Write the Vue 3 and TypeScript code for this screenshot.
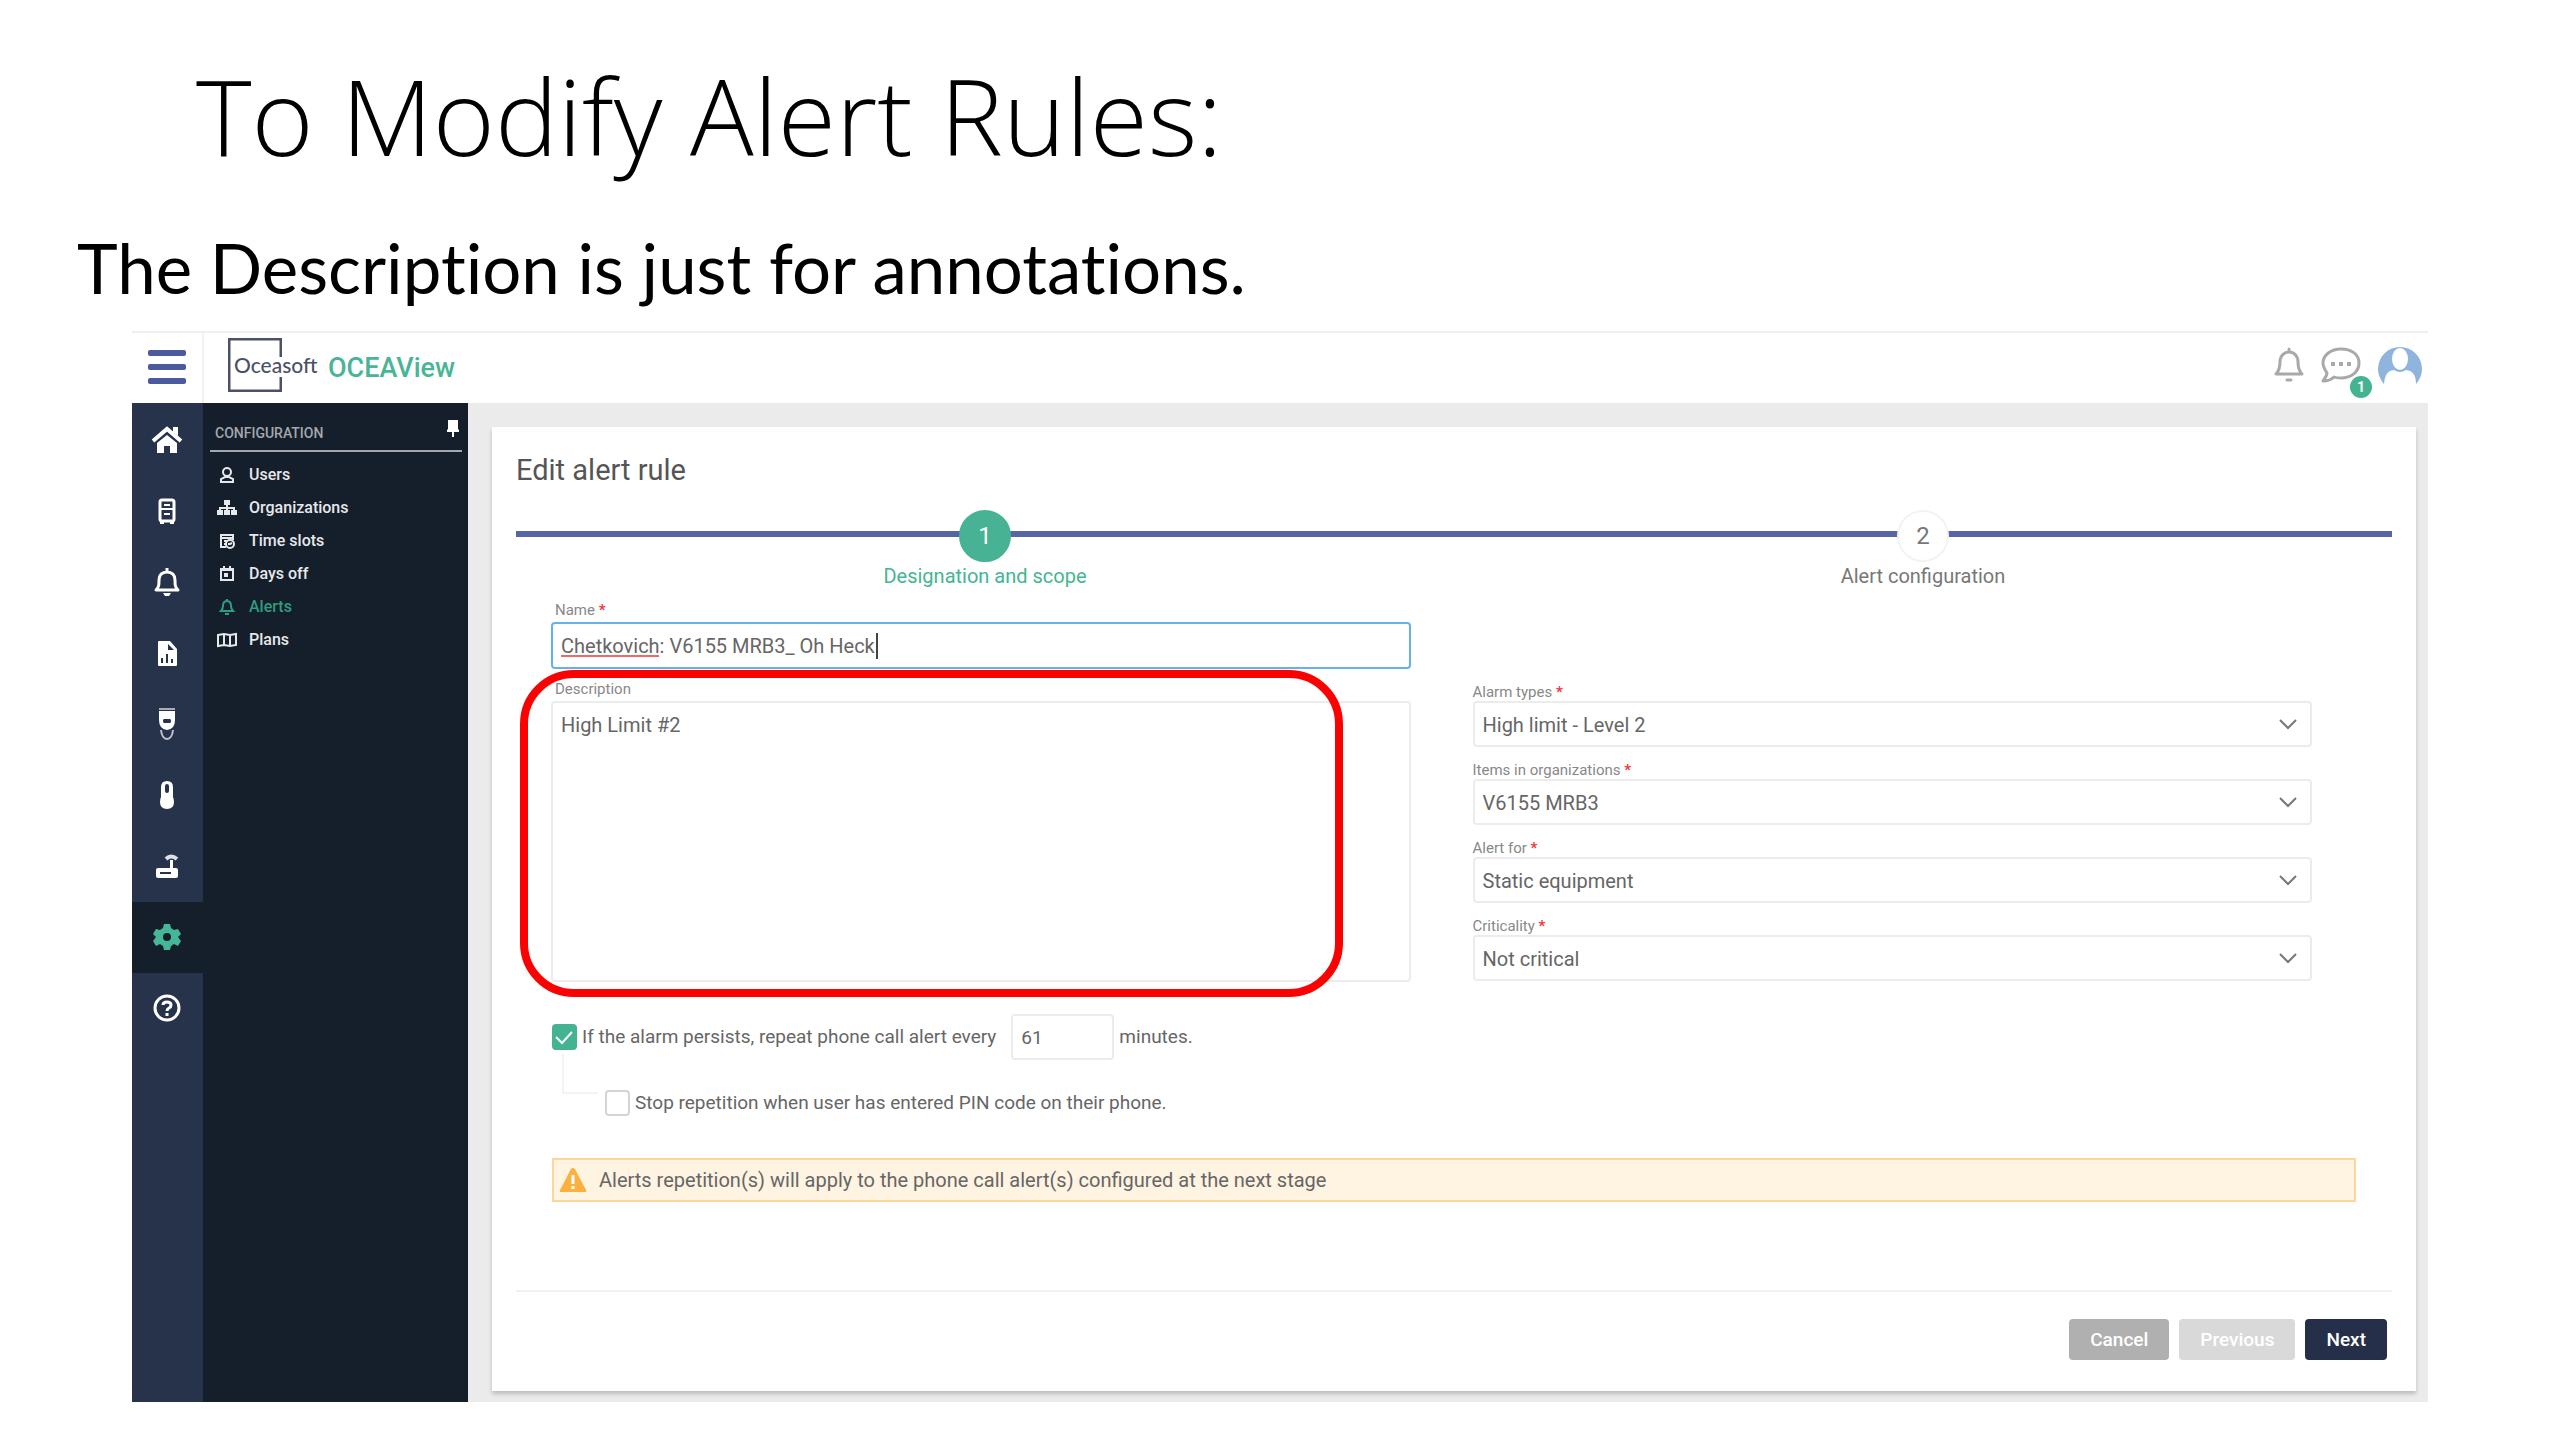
<script setup lang="ts">
import { ref } from 'vue'

interface MenuEntry {
  id: string
  label: string
}

interface SelectField {
  id: string
  label: string
  value: string
}

const railItems: string[] = ['Home', 'Equipment', 'Alarms', 'Reports', 'Modules', 'Sensors', 'Gateways', 'Configuration', 'Help']
const activeRail = 'Configuration'

const menuEntries: MenuEntry[] = [
  { id: 'users', label: 'Users' },
  { id: 'organizations', label: 'Organizations' },
  { id: 'slots', label: 'Time slots' },
  { id: 'days', label: 'Days off' },
  { id: 'alerts', label: 'Alerts' },
  { id: 'plans', label: 'Plans' },
]

const selectFields: SelectField[] = [
  { id: 'alarm-types', label: 'Alarm types', value: 'High limit - Level 2' },
  { id: 'items', label: 'Items in organizations', value: 'V6155 MRB3' },
  { id: 'alert-for', label: 'Alert for', value: 'Static equipment' },
  { id: 'criticality', label: 'Criticality', value: 'Not critical' },
]

const ruleName = ref('Chetkovich: V6155 MRB3_ Oh Heck')
const description = ref('High Limit #2')
const repeatCall = ref(true)
const repeatMinutes = ref('61')
const stopOnPin = ref(false)
</script>

<template>
  <div class="slide">
    <h1 class="slide-title">To Modify Alert Rules:</h1>
    <p class="slide-text">The Description is just for annotations.</p>

    <div class="app">
      <header class="topbar">
        <button class="burger" type="button" aria-label="Toggle menu">
          <span></span><span></span><span></span>
        </button>
        <a class="brand" href="#">
          <span class="logo">
            <svg class="logo-frame" viewBox="0 0 54 54" aria-hidden="true">
              <path d="M53 19V1H1v52h52V39" fill="none" stroke="#4d5166" stroke-width="3" />
            </svg>
            <span class="logo-text">Oceasoft</span>
          </span>
          <span class="product">OCEAView</span>
        </a>
        <div class="tools">
          <button class="tool" type="button" aria-label="Notifications">
            <svg width="32" height="36" viewBox="0 0 32 36" fill="none" stroke="#a9a9a9" stroke-width="3" stroke-linecap="round" stroke-linejoin="round">
              <path d="M16 2v3M3 27h26c-4-4-4-8-4-12 0-6-4-10-9-10s-9 4-9 10c0 4 0 8-4 12zM14 33h4" />
            </svg>
          </button>
          <button class="tool chat" type="button" aria-label="Messages">
            <svg width="40" height="36" viewBox="0 0 40 36" fill="none" stroke="#a9a9a9" stroke-width="3" stroke-linejoin="round">
              <path d="M20 2C10 2 2 8 2 16c0 4 2 7 4 10 0 3-2 5-4 8 5 0 8-1 11-4 2 1 5 1 7 1 10 0 18-6 18-15S30 2 20 2z" />
              <path d="M10 17h4M18 17h4M26 17h4" stroke-width="4" />
            </svg>
            <span class="badge">1</span>
          </button>
          <button class="tool" type="button" aria-label="Profile">
            <svg width="46" height="40" viewBox="0 0 46 40">
              <path d="M7 39A22 22 0 1 1 39 39C39 30 36 26 29 25Q23 29 17 25C10 26 8 30 7 39z" fill="#8fb4dd" />
              <ellipse cx="23" cy="14" rx="8" ry="11" fill="#fff" />
            </svg>
          </button>
        </div>
      </header>

      <div class="body">
        <nav class="rail" aria-label="Main">
          <a v-for="item in railItems" :key="item" href="#" class="rail-item" :class="{ active: item === activeRail }" :aria-label="item">
            <svg width="32" height="32" viewBox="0 0 32 32" fill="currentColor">
              <template v-if="item === 'Home'">
                <path d="M2 17 16 5l14 12" fill="none" stroke="currentColor" stroke-width="4" />
                <path d="M22 3h5v9l-5-4zM16 11 6 19v10h7v-7h6v7h7V19z" />
              </template>
              <template v-else-if="item === 'Equipment'">
                <rect x="9" y="5" width="14" height="21" rx="2" fill="none" stroke="currentColor" stroke-width="3" />
                <path d="M9 14h14M13 10h6M13 19h6" fill="none" stroke="currentColor" stroke-width="2" />
                <path d="M9 26h4v3H9zM19 26h4v3h-4z" />
              </template>
              <template v-else-if="item === 'Alarms'">
                <path d="M16 2v4M5 24h22c-3-3-3-5-3-10 0-5-3-8-8-8s-8 3-8 8c0 5 0 7-3 10z" fill="none" stroke="currentColor" stroke-width="3" stroke-linejoin="round" />
                <path d="M12 27h8l-2 3h-4z" />
              </template>
              <template v-else-if="item === 'Reports'">
                <path fill-rule="evenodd" d="M8 4h11l7 8v16q0 1-1 1H8q-1 0-1-1V5q0-1 1-1zM17 7v6h6zM10 21v5h2v-5zM15 17v9h2v-9zM20 22v4h2v-4z" />
              </template>
              <template v-else-if="item === 'Modules'">
                <path d="M8 0h16v2H8z" opacity="0.6" />
                <path fill-rule="evenodd" d="M8 3h16v9q0 9-8 10-8-1-8-10zM13 11q-1 0-1 2t1 2h6q1 0 1-2t-1-2z" />
                <path d="M10 22q1 9 6 9t6-9" fill="none" stroke="currentColor" stroke-width="2" opacity="0.7" />
              </template>
              <template v-else-if="item === 'Sensors'">
                <path fill-rule="evenodd" d="M16 2q6 0 6 6v10q1 2 1 5 0 7-7 7t-7-7q0-3 1-5V8q0-6 6-6zM16 5q-2 0-2 2v5q0 2 2 2t2-2V7q0-2-2-2z" />
              </template>
              <template v-else-if="item === 'Gateways'">
                <path fill-rule="evenodd" d="M19 10h3v8h3q2 0 2 2v6q0 2-2 2H7q-2 0-2-2v-6q0-2 2-2h12zM9 22v2h11v-2z" />
                <path d="M15 9q5-5 11 0" fill="none" stroke="currentColor" stroke-width="4" opacity="0.85" />
              </template>
              <template v-else-if="item === 'Configuration'">
                <path fill-rule="evenodd" d="M13 3h6l1 4 3 2 4-1 3 5-3 3 3 4-3 5-4-2-3 2-1 4h-6l-1-4-3-2-4 2-3-5 3-4-3-3 3-5 4 1 3-2zM16 12a4 4 0 1 0 0 8 4 4 0 0 0 0-8z" />
              </template>
              <template v-else>
                <circle cx="16" cy="16" r="12" fill="none" stroke="currentColor" stroke-width="3" />
                <path d="M12 13q0-3 4-3t4 3q0 2-2 3t-2 3M16 21v3" fill="none" stroke="currentColor" stroke-width="3" />
              </template>
            </svg>
          </a>
        </nav>

        <aside class="menu">
          <div class="menu-head">
            <span>CONFIGURATION</span>
            <button class="pin" type="button" aria-label="Pin menu">
              <svg width="12" height="18" viewBox="0 0 12 18" fill="#fff">
                <path d="M1 0h10v9l1 1v2H7v5H5v-5H0v-2l1-1z" />
              </svg>
            </button>
          </div>
          <a v-for="entry in menuEntries" :key="entry.id" href="#" class="menu-item" :class="{ active: entry.id === 'alerts' }">
            <svg width="20" height="18" viewBox="0 0 20 18" fill="none" stroke="currentColor" stroke-width="2">
              <template v-if="entry.id === 'users'">
                <circle cx="10" cy="6" r="4" />
                <path d="M4 16v-3l4-2h4l4 2v3z" />
              </template>
              <template v-else-if="entry.id === 'organizations'">
                <path d="M10 4v10M3 13V9h14v4" />
                <path d="M7 1h6v5H7zM0 11h6v5H0zM7 11h6v5H7zM14 11h6v5h-6z" fill="currentColor" stroke="none" />
              </template>
              <template v-else-if="entry.id === 'slots'">
                <path d="M9 15H4V3h12v5M4 6h12M7 9h3M7 12h2" />
                <circle cx="13" cy="12" r="4" />
                <path d="M11 12h2l2-1" />
              </template>
              <template v-else-if="entry.id === 'days'">
                <path d="M4 4h12v11H4zM4 5h12M7 1v3M13 1v3" />
                <path d="M7 8h4v4H7z" fill="currentColor" stroke="none" />
              </template>
              <template v-else-if="entry.id === 'alerts'">
                <path d="M10 1v2M4 13h12c-2-2-2-3-2-5 0-3-1-5-4-5S6 5 6 8c0 2 0 3-2 5zM8 16h4" />
              </template>
              <template v-else>
                <path d="M1 4l6-1 6 1 6-1v11l-6 1-6-1-6 1zM7 3v11M13 4v11" />
              </template>
            </svg>
            <span>{{ entry.label }}</span>
          </a>
        </aside>

        <main class="main">
          <form class="card" @submit.prevent>
            <h2 class="card-title">Edit alert rule</h2>

            <ol class="stepper">
              <li class="step current"><span class="dot">1</span><span>Designation and scope</span></li>
              <li class="step"><span class="dot">2</span><span>Alert configuration</span></li>
            </ol>

            <div class="columns">
              <div class="column-left">
                <div class="field">
                  <label for="rule-name">Name <em>*</em></label>
                  <div class="name-box">
                    <input id="rule-name" v-model="ruleName" type="text" spellcheck="false" />
                    <i class="spell-mark"></i>
                    <i class="caret"></i>
                  </div>
                </div>
                <div class="field description">
                  <label for="rule-description">Description</label>
                  <textarea id="rule-description" v-model="description"></textarea>
                  <div class="highlight"></div>
                </div>
              </div>

              <div class="column-right">
                <div v-for="field in selectFields" :key="field.id" class="select-field">
                  <label :for="field.id">{{ field.label }} <em>*</em></label>
                  <div class="select-box">
                    <select :id="field.id">
                      <option>{{ field.value }}</option>
                    </select>
                    <svg class="chevron" width="20" height="12" viewBox="0 0 20 12" fill="none" stroke="#777" stroke-width="2" aria-hidden="true">
                      <path d="M2 2l8 8 8-8" />
                    </svg>
                  </div>
                </div>
              </div>
            </div>

            <div class="options">
              <div class="option">
                <input id="repeat" v-model="repeatCall" class="tick" type="checkbox" />
                <label for="repeat">If the alarm persists, repeat phone call alert every</label>
                <input id="minutes" v-model="repeatMinutes" class="minutes" type="text" aria-label="Minutes" />
                <span>minutes.</span>
                <svg v-if="repeatCall" class="tick-mark" width="24" height="24" viewBox="0 0 24 24" fill="none" stroke="#fff" stroke-width="2" aria-hidden="true">
                  <path d="M4 12l6 6L20 7" />
                </svg>
              </div>
              <div class="option nested">
                <input id="stop" v-model="stopOnPin" class="tick" type="checkbox" />
                <label for="stop">Stop repetition when user has entered PIN code on their phone.</label>
              </div>
              <div class="notice" role="note">
                <svg width="28" height="26" viewBox="0 0 28 26" aria-hidden="true">
                  <path d="M14 1q1 0 2 1l11 21q1 2-1 2H2q-2 0-1-2L12 2q1-1 2-1z" fill="#fbb03f" />
                  <path d="M14 8v9M14 19v3" stroke="#fff" stroke-width="3" />
                </svg>
                <span>Alerts repetition(s) will apply to the phone call alert(s) configured at the next stage</span>
              </div>
            </div>

            <footer class="actions">
              <button class="btn cancel" type="button">Cancel</button>
              <button class="btn previous" type="button" disabled>Previous</button>
              <button class="btn next" type="submit">Next</button>
            </footer>
          </form>
        </main>
      </div>
    </div>
  </div>
</template>

<style>
body {
  margin: 0;
  background: #fff;
}
</style>

<style scoped>
* {
  box-sizing: border-box;
}

.slide {
  padding: 55px 132px 38px;
  font-family: Roboto, "Liberation Sans", sans-serif;
  font-size: 20px;
  line-height: 24px;
  color: #666;
}

.slide-title,
.slide-text {
  margin: 0;
  font-variant-ligatures: none;
  color: #000;
}

.slide-title {
  padding-left: 64px;
  font-family: "Open Sans", "Noto Sans", sans-serif;
  font-size: 106px;
  font-weight: 300;
  line-height: 120px;
}

.slide-text {
  margin: 53px 0 23px -55px;
  font-family: Lato, "Open Sans", sans-serif;
  font-size: 69px;
  font-weight: 400;
  line-height: 80px;
}

button {
  padding: 0;
  border: 0;
  background: none;
  font: inherit;
}

svg {
  display: block;
}

.topbar {
  display: flex;
  align-items: stretch;
  height: 72px;
  border-top: 2px solid #f0f0f0;
}

.burger {
  display: flex;
  flex-direction: column;
  justify-content: center;
  align-items: center;
  gap: 8px;
  width: 72px;
  padding-bottom: 3px;
  border-right: 2px solid #f2f2f2;
}

.burger span {
  width: 38px;
  height: 6px;
  border-radius: 2px;
  background: #4a5a9c;
}

.brand {
  display: flex;
  align-items: center;
  padding: 0 0 4px 24px;
  text-decoration: none;
}

.logo {
  position: relative;
  display: flex;
  align-items: center;
  width: 100px;
  height: 56px;
}

.logo-frame {
  position: absolute;
  left: 0;
  top: 0;
  width: 54px;
  height: 54px;
}

.logo-text {
  position: relative;
  padding: 0 0 2px 6px;
  font-family: Lato, sans-serif;
  font-size: 21px;
  font-weight: 500;
  color: #4d5166;
}

.product {
  padding-top: 4px;
  font-size: 27px;
  font-weight: 500;
  line-height: 36px;
  color: #4ab596;
}

.tools {
  display: flex;
  align-items: center;
  gap: 16px;
  margin-left: auto;
  padding: 0 5px 6px 0;
}

.chat {
  position: relative;
}

.badge {
  position: absolute;
  right: -11px;
  bottom: -15px;
  width: 22px;
  border-radius: 50%;
  background: #43b391;
  color: #fff;
  font-size: 14px;
  font-weight: 700;
  line-height: 22px;
  text-align: center;
}

.body {
  display: flex;
}

.rail {
  width: 71px;
  padding-top: 2px;
  background: #27324b;
}

.rail-item {
  display: flex;
  align-items: center;
  justify-content: center;
  height: 71px;
  padding: 0 2px 2px 0;
  color: #fff;
}

.rail-item.active {
  background: #151e2b;
  color: #45b797;
}

.menu {
  width: 265px;
  padding: 17px 6px 0 7px;
  background: #151e2b;
}

.menu-head {
  display: flex;
  align-items: center;
  justify-content: space-between;
  height: 32px;
  margin-bottom: 6px;
  padding: 0 3px 4px 5px;
  border-bottom: 2px solid #a4a8ae;
  font-size: 14px;
  font-weight: 500;
  line-height: 16px;
  color: #a4a8ae;
}

.pin {
  align-self: flex-start;
}

.menu-item {
  display: flex;
  align-items: center;
  gap: 12px;
  height: 33px;
  padding-left: 7px;
  color: #e6e8ea;
  font-size: 16px;
  font-weight: 500;
  text-decoration: none;
}

.menu-item.active {
  color: #2f9d7e;
}

.main {
  flex: 1;
  padding: 24px 12px 11px 24px;
  background: #ebebeb;
}

.card {
  padding: 23px 24px 31px;
  background: #fff;
  box-shadow: 0 3px 4px rgba(0, 0, 0, 0.2);
}

.card-title {
  margin: 0;
  font-size: 29px;
  font-weight: 400;
  line-height: 40px;
  color: #555;
}

.stepper {
  position: relative;
  display: flex;
  margin: 20px 0 14px;
  padding: 0;
  list-style: none;
}

.stepper::before {
  content: "";
  position: absolute;
  left: 0;
  right: 0;
  top: 21px;
  height: 6px;
  background: #5566a3;
}

.step {
  position: relative;
  display: flex;
  flex: 1;
  flex-direction: column;
  align-items: center;
  gap: 2px;
  color: #777;
}

.dot {
  width: 52px;
  border: 2px solid #f3f3f3;
  border-radius: 50%;
  background: #fff;
  font-size: 24px;
  line-height: 48px;
  text-align: center;
}

.current {
  color: #45b592;
}

.current .dot {
  border-color: #47b294;
  background: #47b294;
  color: #fff;
}

.columns {
  display: grid;
  grid-template-columns: 859fr 839fr;
  gap: 62px;
  padding: 0 80px 0 35px;
}

.field,
.select-field {
  display: flex;
  flex-direction: column;
}

.field {
  gap: 4px;
}

.description {
  position: relative;
  margin-top: 12px;
}

.column-right {
  display: flex;
  flex-direction: column;
  gap: 15px;
  padding-top: 82px;
}

.select-field {
  gap: 1px;
}

.field label,
.select-field label {
  font-size: 15px;
  line-height: 16px;
  color: #888;
}

.field label {
  padding-left: 4px;
}

em {
  font-style: normal;
  font-weight: 700;
  color: #f0383c;
}

input,
textarea,
select {
  margin: 0;
  border: 2px solid #ececec;
  border-radius: 4px;
  outline: 0;
  background: #fff;
  color: #666;
  font: inherit;
}

.name-box,
.select-box {
  position: relative;
}

.name-box input {
  display: block;
  width: 100%;
  height: 47px;
  padding: 0 8px;
  border-color: #66b1ea;
}

.spell-mark {
  position: absolute;
  left: 10px;
  top: 33px;
  width: 98px;
  height: 2px;
  background: #ee6a6a;
}

.caret {
  position: absolute;
  left: 325px;
  top: 11px;
  width: 2px;
  height: 26px;
  background: #444;
}

textarea {
  height: 281px;
  padding: 10px 8px;
  resize: none;
}

.highlight {
  position: absolute;
  left: -31px;
  right: 68px;
  top: -11px;
  bottom: -15px;
  border: 8px solid #fb0202;
  border-radius: 54px;
  pointer-events: none;
}

select {
  display: block;
  width: 100%;
  height: 46px;
  padding: 2px 8px 0;
  appearance: none;
}

.chevron {
  position: absolute;
  right: 14px;
  top: 17px;
  pointer-events: none;
}

.options {
  display: flex;
  flex-direction: column;
  padding: 32px 36px 0;
}

.option {
  position: relative;
  display: flex;
  align-items: center;
  gap: 5px;
  font-size: 19px;
}

.tick {
  width: 25px;
  height: 26px;
  border-color: #d4d4d4;
  appearance: none;
}

.tick:checked {
  border-color: #43b391;
  background: #43b391;
}

.tick-mark {
  position: absolute;
  left: 0;
  pointer-events: none;
}

.minutes {
  width: 103px;
  height: 46px;
  margin-left: 10px;
  padding: 0 8px;
}

.nested {
  margin: 30px 0 42px 53px;
}

.nested::before {
  content: "";
  position: absolute;
  left: -43px;
  top: -36px;
  width: 34px;
  height: 38px;
  border: solid #f3f3f3;
  border-width: 0 0 2px 2px;
}

.notice {
  display: flex;
  align-items: center;
  gap: 12px;
  height: 44px;
  padding: 0 5px;
  border: 2px solid #fbd79b;
  background: #fff3e2;
}

.actions {
  display: flex;
  justify-content: flex-end;
  gap: 10px;
  margin-top: 88px;
  padding: 27px 5px 0;
  border-top: 2px solid #f1f1f1;
}

.btn {
  height: 41px;
  padding: 0 21px;
  border-radius: 4px;
  color: #fff;
  font-size: 19px;
  font-weight: 500;
}

.cancel {
  background: #b0b0b0;
}

.previous {
  background: #d9d9d9;
}

.next {
  background: #252f4a;
}
</style>
